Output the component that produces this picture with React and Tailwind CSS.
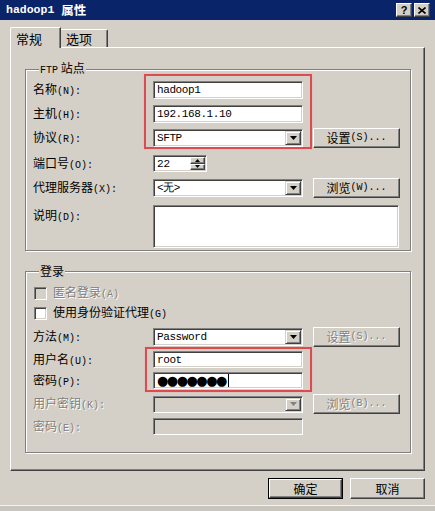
import React from "react";

const SUNKEN =
  "border border-t-[#808080] border-l-[#808080] border-b-white border-r-white shadow-[inset_1px_1px_0_#404040,inset_-1px_-1px_0_#d4d0c8]";
const RAISED =
  "border border-t-white border-l-white border-b-[#404040] border-r-[#404040] shadow-[inset_-1px_-1px_0_#808080]";
const MONO = "font-['Liberation_Mono',monospace]";
const DIS = "text-[#808080] [text-shadow:1px_1px_0_#ffffff]";

function Lbl({ t, k, disabled }) {
  return (
    <span className={"whitespace-nowrap " + (disabled ? DIS : "")}>
      {t}
      <span className={MONO + " text-[10px]"}>({k}):</span>
    </span>
  );
}

function Arrow({ disabled }) {
  return (
    <svg width="7" height="4" viewBox="0 0 7 4">
      <polygon points="0,0 7,0 3.5,4" fill={disabled ? "#808080" : "#000"} />
    </svg>
  );
}

function TextBox({ value, w = "w-[150px]", h = "h-[18px]", disabled, children }) {
  return (
    <div
      className={
        SUNKEN +
        " " +
        w +
        " " +
        h +
        " flex items-center pl-[3px] " +
        MONO +
        " text-[11px] tracking-[-0.4px] " +
        (disabled ? "bg-[#d4d0c8]" : "bg-white")
      }
    >
      {value}
      {children}
    </div>
  );
}

function Select({ value, disabled, h = "h-[18px]" }) {
  return (
    <div
      className={
        SUNKEN +
        " w-[150px] " +
        h +
        " flex items-stretch p-[1px] " +
        (disabled ? "bg-[#d4d0c8]" : "bg-white")
      }
    >
      <div className={"flex-1 flex items-center pl-[2px] " + MONO + " text-[11px] tracking-[-0.4px]"}>
        {value}
      </div>
      <div className="w-[16px] bg-[#d4d0c8] flex items-center justify-center border border-t-[#d4d0c8] border-l-[#d4d0c8] border-b-[#404040] border-r-[#404040] shadow-[inset_1px_1px_0_#fff,inset_-1px_-1px_0_#808080]">
        <Arrow disabled={disabled} />
      </div>
    </div>
  );
}

function Btn({ children, disabled, w = "w-[87px]", h = "h-[20px]" }) {
  return (
    <div
      className={
        RAISED +
        " " +
        w +
        " " +
        h +
        " bg-[#d4d0c8] flex items-center justify-center whitespace-nowrap " +
        (disabled ? DIS : "")
      }
    >
      {children}
    </div>
  );
}

function Row({ label, children, mt, h, start }) {
  return (
    <div className={"flex " + (start ? "items-start " : "items-center ") + mt + " " + h}>
      <div className={"w-[120px] shrink-0 " + (start ? "pt-[2px]" : "pt-[1px]")}>{label}</div>
      {children}
    </div>
  );
}

function Check({ label, disabled, mt }) {
  return (
    <div className={"flex items-center h-[16px] " + mt}>
      <div
        className={
          SUNKEN +
          " ml-[1px] w-[13px] h-[13px] " +
          (disabled ? "bg-[#d4d0c8]" : "bg-white")
        }
      />
      <span className={"ml-[6px] whitespace-nowrap " + (disabled ? DIS : "")}>{label}</span>
    </div>
  );
}

export default function App() {
  return (
    <div className="relative w-[435px] h-[511px] bg-[#d4d0c8] overflow-hidden flex flex-col text-black text-[12px] leading-[16px] font-['Noto_Sans_CJK_SC','Noto_Sans',sans-serif]">
      {/* title bar */}
      <div className="h-[20px] shrink-0 bg-[#0a246a] flex items-center justify-between pl-[6px] pr-[5px]">
        <div className="flex items-center text-white font-bold">
          <span className={MONO + " text-[11.5px]"}>hadoop1</span>
          <span className="ml-[7px] text-[12.5px]">属性</span>
        </div>
        <div className="flex gap-[2px]">
          <div className={RAISED + " w-[16px] h-[14px] bg-[#d4d0c8] flex items-center justify-center font-bold text-[11px] leading-none font-['Liberation_Sans',sans-serif]"}>
            ?
          </div>
          <div className={RAISED + " w-[16px] h-[14px] bg-[#d4d0c8] flex items-center justify-center"}>
            <svg width="8" height="7" viewBox="0 0 8 7">
              <path d="M0.5 0.5L7.5 6.5M7.5 0.5L0.5 6.5" stroke="#000" strokeWidth="1.6" />
            </svg>
          </div>
        </div>
      </div>

      {/* tabs */}
      <div className="flex items-end pl-[10px] mt-[7px] h-[20px] shrink-0">
        <div className="relative z-10 -mb-px h-[21px] w-[51px] bg-[#d4d0c8] border-t border-l border-r border-t-white border-l-white border-r-[#404040] shadow-[inset_-1px_0_0_#808080] rounded-tl-[2px] pl-[5px] pt-[3px] text-[13px]">
          常规
        </div>
        <div className="h-[18px] w-[47px] border-t border-r border-t-white border-r-[#404040] shadow-[inset_-1px_0_0_#808080] rounded-tr-[2px] pl-[5px] pt-[1px] text-[13px]">
          选项
        </div>
      </div>

      {/* panel */}
      <div className="ml-[10px] w-[415px] h-[424px] shrink-0 border border-t-white border-l-white border-b-[#404040] border-r-[#404040] shadow-[inset_-1px_-1px_0_#808080] pl-[14px] pt-[12px]">
        <fieldset className="w-[386px] border border-[#808080] shadow-[1px_1px_0_#fff,inset_1px_1px_0_#fff] pl-[7px] pb-[2px]">
          <legend className="ml-[6px] px-[1px] bg-[#d4d0c8] leading-[16px] whitespace-nowrap">
            <span className={MONO + " text-[10px]"}>FTP</span> 站点
          </legend>
          <Row label={<Lbl t="名称" k="N" />} mt="mt-[2px]" h="h-[18px]">
            <TextBox value="hadoop1" />
          </Row>
          <Row label={<Lbl t="主机" k="H" />} mt="mt-[6px]" h="h-[18px]">
            <TextBox value="192.168.1.10" />
          </Row>
          <Row label={<Lbl t="协议" k="R" />} mt="mt-[5px]" h="h-[20px]">
            <Select value="SFTP" />
            <div className="ml-[10px]">
              <Btn>
                设置<span className={MONO + " text-[10px]"}>(S)...</span>
              </Btn>
            </div>
          </Row>
          <Row label={<Lbl t="端口号" k="O" />} mt="mt-[7px]" h="h-[17px]">
            <div className={SUNKEN + " w-[54px] h-[17px] bg-white flex items-stretch p-[1px]"}>
              <div className={"flex-1 flex items-center pl-[2px] " + MONO + " text-[11px]"}>22</div>
              <div className="w-[15px] flex flex-col">
                <div className={RAISED + " flex-1 bg-[#d4d0c8] flex items-center justify-center"}>
                  <svg width="5" height="3" viewBox="0 0 5 3">
                    <polygon points="0,3 5,3 2.5,0" fill="#000" />
                  </svg>
                </div>
                <div className={RAISED + " flex-1 bg-[#d4d0c8] flex items-center justify-center"}>
                  <svg width="5" height="3" viewBox="0 0 5 3">
                    <polygon points="0,0 5,0 2.5,3" fill="#000" />
                  </svg>
                </div>
              </div>
            </div>
          </Row>
          <Row label={<Lbl t="代理服务器" k="X" />} mt="mt-[6px]" h="h-[20px]">
            <Select value="<无>" />
            <div className="ml-[10px]">
              <Btn>
                浏览<span className={MONO + " text-[10px]"}>(W)...</span>
              </Btn>
            </div>
          </Row>
          <Row label={<Lbl t="说明" k="D" />} mt="mt-[7px]" h="h-[43px]" start>
            <div className={SUNKEN + " w-[246px] h-[43px] bg-white"} />
          </Row>
        </fieldset>

        <fieldset className="mt-[12px] w-[386px] border border-[#808080] shadow-[1px_1px_0_#fff,inset_1px_1px_0_#fff] pl-[7px] pb-[17px]">
          <legend className="ml-[6px] px-[1px] bg-[#d4d0c8] leading-[16px]">登录</legend>
          <Check
            disabled
            mt="mt-[6px]"
            label={
              <>
                匿名登录<span className={MONO + " text-[10px]"}>(A)</span>
              </>
            }
          />
          <Check
            mt="mt-[4px]"
            label={
              <>
                使用身份验证代理<span className={MONO + " text-[10px]"}>(G)</span>
              </>
            }
          />
          <Row label={<Lbl t="方法" k="M" />} mt="mt-[6px]" h="h-[20px]">
            <Select value="Password" />
            <div className="ml-[10px]">
              <Btn disabled>
                设置<span className={MONO + " text-[10px]"}>(S)...</span>
              </Btn>
            </div>
          </Row>
          <Row label={<Lbl t="用户名" k="U" />} mt="mt-[4px]" h="h-[17px]">
            <TextBox value="root" h="h-[17px]" />
          </Row>
          <Row label={<Lbl t="密码" k="P" />} mt="mt-[4px]" h="h-[17px]">
            <TextBox h="h-[17px]">
              <span className="font-['DejaVu_Sans',sans-serif] text-[13px] tracking-[-1.5px] leading-none">●●●●●●●</span>
              <span className="ml-[2px] w-px h-[13px] bg-black" />
            </TextBox>
          </Row>
          <Row label={<Lbl t="用户密钥" k="K" disabled />} mt="mt-[5px]" h="h-[20px]">
            <Select value="" disabled h="h-[17px]" />
            <div className="ml-[10px]">
              <Btn disabled>
                浏览<span className={MONO + " text-[10px]"}>(B)...</span>
              </Btn>
            </div>
          </Row>
          <Row label={<Lbl t="密码" k="E" disabled />} mt="mt-[4px]" h="h-[17px]">
            <TextBox value="" h="h-[17px]" disabled />
          </Row>
        </fieldset>
      </div>

      {/* buttons */}
      <div className="mt-[7px] flex justify-end gap-[7px] pr-[10px] shrink-0">
        <div className="w-[75px] h-[21px] border border-black">
          <Btn w="w-full" h="h-full">确定</Btn>
        </div>
        <Btn w="w-[75px]" h="h-[21px]">取消</Btn>
      </div>

      <div className="mt-auto h-[6px] shrink-0 border-t border-t-[#f4f3ef] bg-[#c8c5be]" />

      {/* red highlight boxes */}
      <div className="absolute left-[144px] top-[74px] w-[168px] h-[75px] border-2 border-[#dc4b4f] shadow-[0_0_1px_#e89a9a]" />
      <div className="absolute left-[145px] top-[347px] w-[167px] h-[45px] border-2 border-[#dc4b4f] shadow-[0_0_1px_#e89a9a]" />
    </div>
  );
}
